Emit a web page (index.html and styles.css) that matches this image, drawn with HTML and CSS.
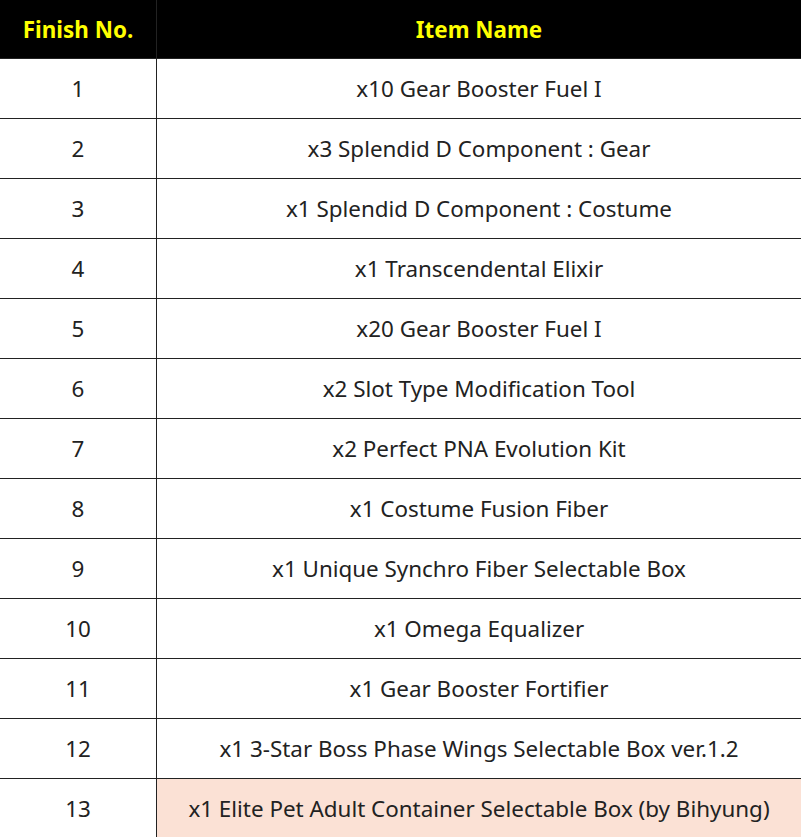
FILE: index.html
```html
<!DOCTYPE html>
<html>
<head>
<meta charset="utf-8">
<link rel="stylesheet" href="styles.css">
</head>
<body>
<table class="rewards">
  <thead>
    <tr><th class="col-no">Finish No.</th><th class="col-item">Item Name</th></tr>
  </thead>
  <tbody>
    <tr><td>1</td><td>x10 Gear Booster Fuel I</td></tr>
    <tr><td>2</td><td>x3 Splendid D Component : Gear</td></tr>
    <tr><td>3</td><td>x1 Splendid D Component : Costume</td></tr>
    <tr><td>4</td><td>x1 Transcendental Elixir</td></tr>
    <tr><td>5</td><td>x20 Gear Booster Fuel I</td></tr>
    <tr><td>6</td><td>x2 Slot Type Modification Tool</td></tr>
    <tr><td>7</td><td>x2 Perfect PNA Evolution Kit</td></tr>
    <tr><td>8</td><td>x1 Costume Fusion Fiber</td></tr>
    <tr><td>9</td><td>x1 Unique Synchro Fiber Selectable Box</td></tr>
    <tr><td>10</td><td>x1 Omega Equalizer</td></tr>
    <tr><td>11</td><td>x1 Gear Booster Fortifier</td></tr>
    <tr><td>12</td><td>x1 3-Star Boss Phase Wings Selectable Box ver.1.2</td></tr>
    <tr><td>13</td><td class="highlight">x1 Elite Pet Adult Container Selectable Box (by Bihyung)</td></tr>
  </tbody>
</table>
</body>
</html>
```
FILE: styles.css
```css
html, body {
  margin: 0;
  padding: 0;
  background: #ffffff;
}
body {
  overflow: hidden;
  font-family: "Noto Sans", "Open Sans", sans-serif;
  color: #222222;
}
.rewards {
  border-collapse: collapse;
  width: 803px;
  margin: 0 0 0 -1px;
  table-layout: fixed;
}
.rewards th,
.rewards td {
  border: 1px solid #222222;
  text-align: center;
  vertical-align: middle;
  padding: 0;
  font-size: 22.4px;
}
.rewards th {
  background: #000000;
  color: #ffff00;
  font-weight: 700;
  height: 58px;
  border-top: none;
}
.rewards td {
  height: 59px;
  font-weight: 400;
}
.col-no {
  width: 156px;
}
.rewards td.highlight {
  background: #fbe1d5;
}
```
